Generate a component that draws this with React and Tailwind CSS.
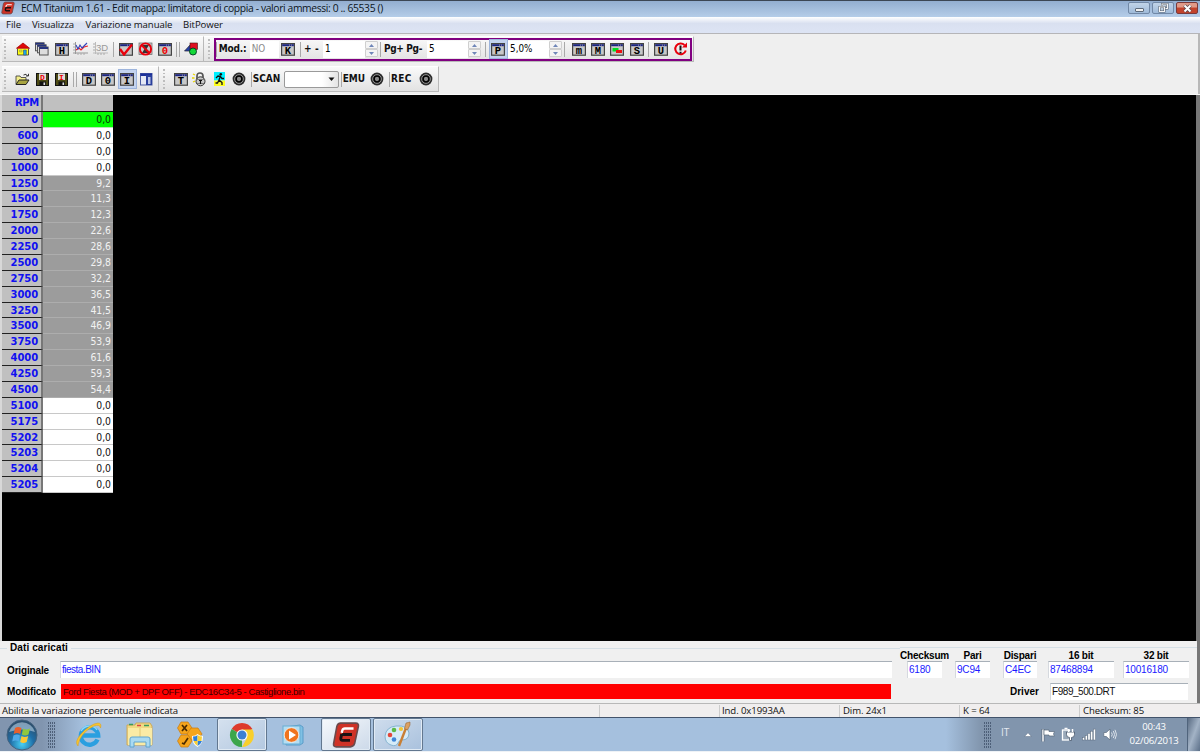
import React from "react";
import clsx from "clsx";

const rows = [
  ["0", "0,0"],
  ["600", "0,0"],
  ["800", "0,0"],
  ["1000", "0,0"],
  ["1250", "9,2"],
  ["1500", "11,3"],
  ["1750", "12,3"],
  ["2000", "22,6"],
  ["2250", "28,6"],
  ["2500", "29,8"],
  ["2750", "32,2"],
  ["3000", "36,5"],
  ["3250", "41,5"],
  ["3500", "46,9"],
  ["3750", "53,9"],
  ["4000", "61,6"],
  ["4250", "59,3"],
  ["4500", "54,4"],
  ["5100", "0,0"],
  ["5175", "0,0"],
  ["5202", "0,0"],
  ["5203", "0,0"],
  ["5204", "0,0"],
  ["5205", "0,0"],
];

const checksums = [
  { label: "Checksum", value: "6180", col: "w-[49px] mr-[6px]", box: "w-[35px] ml-[7px]" },
  { label: "Pari", value: "9C94", col: "w-[35px] mr-[13px]", box: "w-[35px]" },
  { label: "Dispari", value: "C4EC", col: "w-[34px] mr-[11px]", box: "w-[34px]" },
  { label: "16 bit", value: "87468894", col: "w-[66px] mr-[9px]", box: "w-[66px]" },
  { label: "32 bit", value: "10016180", col: "w-[66px]", box: "w-[66px]" },
];

/* ---------- toolbar pieces ---------- */

const Slot = ({ children, active }) => (
  <div
    className={clsx(
      "flex h-[20px] w-[19.3px] shrink-0 items-center justify-center",
      active && "border border-[#9db4dc] bg-[#c3d3ee]"
    )}
  >
    {children}
  </div>
);

const Sep = ({ double, wide }) => (
  <div className={clsx("flex shrink-0 justify-center gap-[2px]", wide ? "w-[7px]" : "w-[5px]")}>
    <i className="h-[15px] w-px bg-[#a9a9a9]" />
    {double && <i className="h-[15px] w-px bg-[#a9a9a9]" />}
  </div>
);

const Grip = () => (
  <div className="flex w-[5px] shrink-0 flex-col items-center gap-[2px]">
    {[0, 1, 2, 3, 4, 5].map((i) => (
      <i key={i} className="h-[1.6px] w-[2px] bg-[#bdbdbd]" />
    ))}
  </div>
);

const Win = ({ letter, color = "#000", children }) => (
  <svg width="14" height="13" viewBox="0 0 14 13">
    <rect x="0.6" y="0.6" width="12.8" height="11.6" fill="#c8c8c8" stroke="#444" strokeWidth="1.2" />
    <rect x="1.2" y="1.2" width="11.6" height="2" fill="#1b2480" />
    <rect x="8" y="1.6" width="1" height="1" fill="#99a" />
    <rect x="10" y="1.6" width="1" height="1" fill="#99a" />
    {letter && (
      <text
        x="7"
        y="11.3"
        textAnchor="middle"
        fontSize="10.5"
        fontWeight="700"
        fontFamily="Liberation Mono, monospace"
        fill={color}
      >
        {letter}
      </text>
    )}
    {children}
  </svg>
);

const House = () => (
  <svg width="14" height="14" viewBox="0 0 14 14">
    <path d="M1.5 6.500v6.500h11V6.500" fill="#ffff10" stroke="#333" strokeWidth="0.8" />
    <path d="M7 1L0.500 6.200h13z" fill="#e00808" stroke="#a00" strokeWidth="0.8" />
    <path d="M3.500 8h2.500v2H3.500z" fill="#e8f020" stroke="#886" strokeWidth="0.5" />
    <path d="M7.500 8h2.800v5H7.500z" fill="#19a6e8" stroke="#456" strokeWidth="0.6" />
  </svg>
);

const Cascade = () => (
  <svg width="14" height="14" viewBox="0 0 14 14">
    {[[0.5, 0.8], [2.5, 2.8], [4.5, 5]].map(([x, y]) => (
      <g key={x}>
        <rect x={x} y={y} width="8.6" height="8" fill="#ddd" stroke="#555" />
        <rect x={x} y={y} width="8.6" height="2" fill="#26337f" />
      </g>
    ))}
  </svg>
);

const Graph = ({ grey }) => (
  <svg width="15" height="14" viewBox="0 0 15 14">
    <path d="M2.500 0v12M0 11h15" stroke={grey ? "#bbb" : "#999"} fill="none" />
    <path d="M0 2h2M0 5h2M0 8h2M5 11v2M8 11v2M11 11v2" stroke="#aaa" />
    {grey ? (
      <text x="3" y="8.500" fontSize="9.5" fontFamily="Liberation Sans, sans-serif" fill="#999">
        3D
      </text>
    ) : (
      <>
        <path d="M3 8l3-2 2 2 3-3 4-1" stroke="#e22" fill="none" strokeWidth="1.2" />
        <path d="M3 3l2 4 2-4 2 3 2-2 3-3" stroke="#34b" fill="none" strokeWidth="1.1" />
      </>
    )}
  </svg>
);

const CheckWin = () => (
  <Win>
    <path d="M1 6l4 5.500L13 1.500" stroke="#e8000c" strokeWidth="2.4" fill="none" />
  </Win>
);

const Forbidden = () => (
  <svg width="15" height="14" viewBox="0 0 15 14">
    <rect x="1" y="1" width="13" height="11.500" fill="#c8c8c8" stroke="#666" strokeWidth="0.7" />
    <path d="M4 3h7l-2.500 4 2.500 4H4l2.500-4z" fill="#333" />
    <circle cx="7.500" cy="7" r="5.600" fill="none" stroke="#e8000c" strokeWidth="1.9" />
    <path d="M3.500 3l8 8" stroke="#e8000c" strokeWidth="1.9" />
  </svg>
);

const Shapes = () => (
  <svg width="15" height="14" viewBox="0 0 15 14">
    <path d="M0.500 9L7 2v7z" fill="#2440a8" stroke="#223" strokeWidth="0.7" />
    <rect x="6" y="1" width="7.5" height="6.5" fill="#e01020" stroke="#411" strokeWidth="0.6" />
    <circle cx="9" cy="9.5" r="3.5" fill="#12d838" stroke="#032" strokeWidth="0.9" />
  </svg>
);

const OpenFolder = () => (
  <svg width="15" height="13" viewBox="0 0 15 13">
    <path d="M1 11V3h4l1 1.500h5V7" fill="#f3ee8a" stroke="#333" strokeWidth="0.8" />
    <path d="M1 11.500L4 7h10l-3 4.500z" fill="#a8a440" stroke="#222" />
    <path d="M8.500 2q3-2 4 1M11 3h2.500V0.800" fill="none" stroke="#222" strokeWidth="0.9" />
  </svg>
);

const Floppy = ({ letter }) => (
  <svg width="13" height="13" viewBox="0 0 13 13">
    <rect x="0.5" y="0.5" width="12" height="12" fill="#4c4a14" stroke="#111" />
    <rect x="3" y="0.5" width="7" height="6.5" fill="#ddd" />
    <rect x="3.5" y="8.5" width="6.5" height="4" fill="#111" />
    <rect x="7.5" y="9.5" width="1.6" height="2.5" fill="#ddd" />
    <text x="6.500" y="6.500" textAnchor="middle" fontSize="8" fontWeight="700" fontFamily="Liberation Mono, monospace" fill="#e00">
      {letter}
    </text>
  </svg>
);

const Panels = () => (
  <svg width="13" height="13" viewBox="0 0 13 13">
    <rect x="0.5" y="0.5" width="11.5" height="11.5" fill="#e4e8f4" stroke="#4a5aa0" />
    <rect x="0.5" y="0.5" width="11.5" height="2.5" fill="#1b2f9a" />
    <rect x="6" y="2" width="6" height="10" fill="#2a3f9c" />
    <rect x="8" y="4" width="2.5" height="7" fill="#b9c4e6" />
  </svg>
);

const Padlock = () => (
  <svg width="16" height="15" viewBox="0 0 16 15">
    <path d="M1 2l2 1M0 6h2.500M1 10l2-1" stroke="#e8d400" strokeWidth="1.3" />
    <path d="M5 7V4q0-3 3-3t3 3v3" fill="none" stroke="#555" strokeWidth="1.7" />
    <circle cx="8.5" cy="9.3" r="4.5" fill="#c8c8c8" stroke="#333" />
    <path d="M5 7.500h7M5 11.500h7" stroke="#666" strokeWidth="0.8" />
    <path d="M7 8.500h3M8.500 8.500V12" stroke="#111" strokeWidth="1.2" />
  </svg>
);

const Runner = () => (
  <svg width="11" height="14" viewBox="0 0 11 14">
    <rect width="11" height="8.5" fill="#00f0ff" />
    <rect y="8.5" width="11" height="5.5" fill="#ffff20" />
    <circle cx="6.8" cy="2.2" r="1.3" fill="#111" />
    <path d="M6.500 3.500L5 8l3 2.500v2.500M5 8l-1.500 3H1.500M2 6l2-2 2.500 0.500L8 6.500h2" fill="none" stroke="#111" strokeWidth="1.3" />
  </svg>
);

const Disc = () => (
  <svg width="14" height="14" viewBox="0 0 14 14">
    <circle cx="7" cy="7" r="6.4" fill="#2c2c2c" />
    <circle cx="7" cy="7" r="4.4" fill="none" stroke="#a5a5a5" strokeWidth="0.8" />
    <circle cx="7" cy="7" r="2.8" fill="#888" stroke="#000" strokeWidth="1.3" />
  </svg>
);

const Refresh = () => (
  <svg width="15" height="15" viewBox="0 0 15 15">
    <path d="M11.500 3A5.400 5.400 0 1 0 12.800 8.500" fill="none" stroke="#e8000c" strokeWidth="2" />
    <path d="M9 5.500h5V0.500z" fill="#e8000c" />
    <path d="M7.500 3.500v5M7.500 9.800v1.700" stroke="#111" strokeWidth="2" />
  </svg>
);

const Spin = () => (
  <div className="flex h-[16px] w-[13px] shrink-0 flex-col">
    {["M1 4h5L3.500 1z", "M1 1h5L3.500 4z"].map((d) => (
      <span key={d} className="flex h-[8px] items-center justify-center rounded-[1px] border border-[#cfcfcf] bg-[#f4f4f4]">
        <svg width="7" height="5" viewBox="0 0 7 5">
          <path d={d} fill="#6f86b8" />
        </svg>
      </span>
    ))}
  </div>
);

const Field = ({ className, children }) => (
  <div className={clsx("h-[17px] shrink-0 bg-white pl-[2px] font-['DejaVu_Sans_Condensed',sans-serif] text-[9.8px] leading-[15px]", className)}>
    {children}
  </div>
);

const Label = ({ className, children }) => (
  <span
    className={clsx(
      "shrink-0 pb-px whitespace-nowrap font-['DejaVu_Sans_Condensed',sans-serif] text-[10px] leading-[15px] font-bold text-[#111]",
      className
    )}
  >
    {children}
  </span>
);

const band =
  "flex h-[26px] items-center border-t border-r border-b border-t-white border-r-[#b9b9b9] border-b-[#b9b9b9] bg-linear-to-b from-[#fafafa] to-[#e2e2e2]";

const Toolbar = () => (
  <div className="h-[61px] border-t border-r-2 border-t-[#b5b5b8] border-r-[#b8b8b8] bg-[#efefef] pt-[2px] pl-[2px]">
    <div className="flex h-[26px]">
      <div className={clsx(band, "w-[202px]")}>
        <Grip />
        <div className="w-[6.3px]" />
        <Slot><House /></Slot>
        <Slot><Cascade /></Slot>
        <Slot><Win letter="H" /></Slot>
        <Slot><Graph /></Slot>
        <Slot><Graph grey /></Slot>
        <Sep wide />
        <Slot><CheckWin /></Slot>
        <Slot><Forbidden /></Slot>
        <Slot><Win letter="0" color="#e00" /></Slot>
        <Sep double wide />
        <Slot><Shapes /></Slot>
      </div>
      <div className={clsx(band, "w-[490px] pl-[2px]")}>
        <Grip />
        <div className="ml-[3px] flex h-[23px] w-[478px] items-center border-2 border-[#800080]">
          <i className="h-[15px] w-px bg-[#a9a9a9]" />
          <Label className="ml-[2px] w-[31px] tracking-[-0.2px]">Mod.:</Label>
          <Field className="w-[29px] text-[#8a8a8a]">NO</Field>
          <Slot><Win letter="K" /></Slot>
          <Sep />
          <Label className="w-[20px] pl-[1px] tracking-[0.1px]">+ -</Label>
          <Field className="w-[42px]">1</Field>
          <Spin />
          <Sep />
          <Label className="w-[44px] pl-[1px] tracking-[-0.35px]">Pg+ Pg-</Label>
          <Field className="w-[41px]">5</Field>
          <Spin />
          <div className="w-[1px]" />
          <Sep wide />
          <Slot active><Win letter="P" /></Slot>
          <Field className="w-[41px]">5,0%</Field>
          <Spin />
          <Sep />
          <div className="w-[3px]" />
          <Slot><Win letter="m" /></Slot>
          <Slot><Win letter="M" /></Slot>
          <Slot>
            <Win>
              <rect x="2.5" y="5" width="6" height="3.5" fill="#0d2" />
              <rect x="6" y="7" width="6" height="3" fill="#e11" />
            </Win>
          </Slot>
          <Slot><Win letter="S" /></Slot>
          <Sep />
          <Slot><Win letter="U" /></Slot>
          <Slot><Refresh /></Slot>
        </div>
      </div>
    </div>
    <div className="mt-[4px] flex h-[26px]">
      <div className={clsx(band, "w-[157px]")}>
        <Grip />
        <div className="w-[6.3px]" />
        <Slot><OpenFolder /></Slot>
        <Slot><Floppy letter="D" /></Slot>
        <Slot><Floppy letter="I" /></Slot>
        <Sep double wide />
        <div className="w-px" />
        <Slot><Win letter="D" /></Slot>
        <Slot><Win letter="0" /></Slot>
        <Slot active><Win letter="I" /></Slot>
        <Slot><Panels /></Slot>
      </div>
      <div className={clsx(band, "w-[280px] pl-[2px]")}>
        <Grip />
        <div className="w-[5.500px]" />
        <Slot><Win letter="T" /></Slot>
        <Slot><Padlock /></Slot>
        <Slot><Runner /></Slot>
        <Slot><Disc /></Slot>
        <Sep />
        <Label className="ml-[-1px] w-[31px]">SCAN</Label>
        <div className="flex h-[17px] w-[55px] shrink-0 items-center justify-end rounded-[2px] border border-[#9a9a9a] bg-linear-to-r from-white from-70% to-[#e4e4e4] pr-[3px]">
          <svg width="7" height="5" viewBox="0 0 7 5">
            <path d="M0.500 0.500h6L3.500 4z" fill="#111" />
          </svg>
        </div>
        <Sep />
        <Label className="ml-[-1px] w-[25px]">EMU</Label>
        <Slot><Disc /></Slot>
        <Sep />
        <Label className="ml-[-1px] w-[25px] tracking-[0.3px]">REC</Label>
        <Slot><Disc /></Slot>
      </div>
    </div>
  </div>
);

/* ---------- window ---------- */

const EcmLogo = ({ size }) => (
  <svg width={size} height={size} viewBox="0 0 26 26">
    <path d="M8 2h14q3 0 2.500 3L21 21q-1 3-4 3H4q-3 0-2.500-3L4.500 5q0.800-3 3.500-3z" fill="#cf3226" stroke="#6a4a4c" strokeWidth="1.5" />
    <path d="M20 7h-8q-2 0-2.500 2L9 11" fill="none" stroke="#fff" strokeWidth="2.2" />
    <path d="M9.500 12.500h9M9 12l-0.800 4q-0.200 2 1.500 2h7" fill="none" stroke="#1b1113" strokeWidth="2.7" />
  </svg>
);

const winBtn = "flex h-[12px] w-[22px] items-center justify-center rounded-[2px] border";

const TitleBar = () => (
  <div className="flex h-[17px] items-start border-t border-[#3c4654] bg-linear-to-b from-[#93aed0] to-[#b5cde8] pl-[1px]">
    <EcmLogo size={14} />
    <span className="ml-[6px] whitespace-nowrap font-['Open_Sans',sans-serif] text-[10.3px] leading-[14px] tracking-[-0.36px] text-[#0c1420]">
      ECM Titanium 1.61 - Edit mappa: limitatore di coppia - valori ammessi: 0 .. 65535 ()
    </span>
    <div className="mt-px mr-[2px] ml-auto flex gap-[2px]">
      <div className={clsx(winBtn, "border-[#7188a6] bg-linear-to-b from-[#c1d3e8] to-[#9fbad9]")}>
        <i className="mt-[4px] h-[4px] w-[9px] rounded-[1px] border border-[#5d6b7c] bg-[#f0f0f0]" />
      </div>
      <div className={clsx(winBtn, "border-[#7188a6] bg-linear-to-b from-[#c1d3e8] to-[#9fbad9]")}>
        <svg width="11" height="10" viewBox="0 0 11 10">
          <rect x="4" y="1" width="5.5" height="4.5" fill="#bcd" stroke="#56606e" strokeWidth="2" />
          <rect x="4" y="1" width="5.5" height="4.5" fill="none" stroke="#f4f4f4" />
          <rect x="1.5" y="4" width="5" height="4.5" fill="#bcd" stroke="#56606e" strokeWidth="2" />
          <rect x="1.5" y="4" width="5" height="4.5" fill="none" stroke="#f4f4f4" />
        </svg>
      </div>
      <div className={clsx(winBtn, "border-[#7a3a3a] bg-linear-to-b from-[#e09a88] from-40% to-[#c2432c] to-50%")}>
        <svg width="11" height="9" viewBox="0 0 11 9">
          <path d="M2.500 1.500l6 6M8.500 1.500l-6 6" stroke="#5c4a50" strokeWidth="3.6" />
          <path d="M2.500 1.500l6 6M8.500 1.500l-6 6" stroke="#fff" strokeWidth="2" />
        </svg>
      </div>
    </div>
  </div>
);

const MenuBar = () => (
  <div className="flex h-[16px] items-center bg-linear-to-b from-white via-[#d9e0f0] via-40% to-[#dde4f4] pl-[6px] font-['Open_Sans',sans-serif] text-[9.6px] text-[#111]">
    <span className="w-[26px]">File</span>
    <span className="w-[53.5px] tracking-[-0.1px]">Visualizza</span>
    <span className="w-[97.5px] tracking-[-0.08px]">Variazione manuale</span>
    <span className="tracking-[-0.05px]">BitPower</span>
  </div>
);

const MapTable = () => (
  <div className="h-[546px] border-r-[4px] border-l-2 border-r-[#777] border-l-[#d8d8d8] bg-black">
    <div className="w-[111px] bg-[#c0c0c0]">
      <div className="flex h-[17px] border-b border-[#111]">
        <div className="w-[41px] border-r-2 border-[#777] pr-[2px] text-right font-['DejaVu_Sans',sans-serif] text-[10px] leading-[15px] font-bold tracking-[-0.3px] text-[#1010f0]">
          RPM
        </div>
      </div>
      {rows.map(([rpm, value], i) => {
        const selected = i >= 4 && i <= 17;
        return (
          <div key={rpm} className="flex h-[15.88px] font-['DejaVu_Sans',sans-serif] leading-[15px]">
            <div className="w-[41px] border-r-2 border-b border-r-[#777] border-b-[#222] bg-[#c0c0c0] pr-[3px] text-right text-[10px] font-bold tracking-[-0.1px] text-[#1010f0]">
              {rpm}
            </div>
            <div
              className={clsx(
                "w-[70px] border-b pr-[2px] text-right font-['DejaVu_Sans_Condensed',sans-serif] text-[10.3px]",
                i === 0 && "border-[#b5e8b5] bg-[#00ff00] text-[#063006]",
                selected && "border-[#adadad] bg-[#9c9c9c] text-[#f2f2f2]",
                i !== 0 && !selected && "border-[#c8c8c8] bg-white text-[#111]"
              )}
            >
              {value}
            </div>
          </div>
        );
      })}
    </div>
  </div>
);

const inset = "h-[17px] border-t border-l border-t-[#a8b0b8] border-l-[#d5d9de] bg-white leading-[15px]";
const sansBold = "font-['Liberation_Sans',sans-serif] text-[10px] font-bold text-black";

const LoadedData = () => (
  <div className="flex h-[62px] border-r-[3px] border-[#777] bg-[#f0f0f0] font-['Liberation_Sans',sans-serif] text-[10px]">
    <div className="w-[900px]">
      <div className="flex h-[14px] items-center">
        <i className="h-px w-[7px] bg-[#d5dfe5]" />
        <span className={clsx(sansBold, "-mt-px px-[3px] tracking-[0.1px]")}>Dati caricati</span>
        <i className="h-px flex-1 bg-[#d5dfe5]" />
      </div>
      <div className="mt-[6px] flex h-[17px] items-center pl-[7px]">
        <span className={clsx(sansBold, "w-[53px] pt-[2px] tracking-[-0.15px]")}>Originale</span>
        <div className={clsx(inset, "w-[832px] pl-[1px] tracking-[-0.5px] text-[#1a1aff]")}>fiesta.BIN</div>
      </div>
      <div className="mt-[5px] flex h-[16px] items-center pl-[7px]">
        <span className={clsx(sansBold, "w-[54px] tracking-[-0.1px]")}>Modificato</span>
        <div className="h-[15px] w-[830px] bg-[#ff0000] pl-[2px] text-[9.5px] leading-[15px] tracking-[-0.43px] text-[#3a0000]">
          Ford Fiesta (MOD + DPF OFF) - EDC16C34-5 - Castiglione.bin
        </div>
      </div>
    </div>
    <div className="mt-[6px] flex-1 border-t border-[#d5dfe5]">
      <div className="flex">
        {checksums.map((c) => (
          <div key={c.label} className={clsx("shrink-0", c.col)}>
            <div className={clsx(sansBold, "flex h-[13px] items-end justify-center whitespace-nowrap leading-[11px] tracking-[-0.2px]")}>
              {c.label}
            </div>
            <div className={clsx(inset, c.box, "pl-[1px] tracking-[-0.2px] text-[#1a1aff]")}>{c.value}</div>
          </div>
        ))}
      </div>
      <div className="mt-[5px] flex items-center pl-[110px]">
        <span className={clsx(sansBold, "w-[40px]")}>Driver</span>
        <div className={clsx(inset, "h-[16px] w-[138px] pl-[1px] tracking-[-0.45px] text-[#111]")}>F989_500.DRT</div>
      </div>
    </div>
  </div>
);

const StatusBar = () => (
  <div className="flex h-[14px] items-center border-t border-[#b8b8b8] bg-[#f0eeee] font-['Open_Sans',sans-serif] text-[9.6px] leading-[12px] tracking-[-0.1px] whitespace-nowrap text-[#111]">
    <span className="w-[600px] border-r border-[#ccc] pl-[2px]">Abilita la variazione percentuale indicata</span>
    <span className="h-[12px] w-[120px] border-r border-[#ccc]" />
    <span className="w-[120px] border-r border-[#ccc] pl-[2px]">Ind. 0x1993AA</span>
    <span className="w-[120px] border-r border-[#ccc] pl-[3px]">Dim. 24x1</span>
    <span className="w-[120px] border-r border-[#ccc] pl-[3px]">K = 64</span>
    <span className="pl-[3px]">Checksum: 85</span>
  </div>
);

/* ---------- taskbar ---------- */

const Dots = () => (
  <div className="grid w-[7px] grid-cols-4 gap-[1px]">
    {Array.from({ length: 36 }, (_, i) => (
      <i key={i} className="h-[2px] w-px bg-[#4d5f78]" />
    ))}
  </div>
);

const StartOrb = () => (
  <svg width="32" height="32" viewBox="0 0 32 32">
    <defs>
      <radialGradient id="orb" cx="50%" cy="80%" r="70%">
        <stop offset="0" stopColor="#48d0f4" />
        <stop offset="0.55" stopColor="#1f6fa8" />
        <stop offset="1" stopColor="#2c506f" />
      </radialGradient>
    </defs>
    <circle cx="16" cy="16" r="15" fill="url(#orb)" stroke="#45637f" />
    <path d="M3 13a13.500 13.500 0 0 1 26 0q-13-5-26 0z" fill="#c6dced" opacity="0.55" />
    <path d="M9 9q3-2 6.500 0l-1.200 6q-3.300-2-6.600 0z" fill="#e9602c" />
    <path d="M17 9.500q3 2 7 0l-1.500 6q-3.500 2-6.700 0z" fill="#90c73e" />
    <path d="M7.400 16.500q3.300-2 6.600 0l-1.300 6q-3-2-6.400 0z" fill="#50a9e8" />
    <path d="M15.500 17q3.200 2 6.700 0l-1.500 6q-3.400 2-6.500 0z" fill="#fbc633" />
  </svg>
);

const Explorer = () => (
  <svg width="28" height="26" viewBox="0 0 28 26">
    <path d="M1 3h8l1-2h14l2 3v19H1z" fill="#f0d983" stroke="#cda95a" />
    <path d="M3 2.500h4M18 3.500h5" stroke="#3a9c5b" strokeWidth="1.5" />
    <path d="M11 3.500h4" stroke="#d44" strokeWidth="1.5" />
    <path d="M2 6h24v17H2z" fill="#faeba5" />
    <path d="M14 6v12" stroke="#e2c877" />
    <path d="M4 25v-8q0-2 2-2h16q2 0 2 2v8h-4v-5H8v5z" fill="#a9daf2" stroke="#5ea4cf" />
  </svg>
);

const InternetExplorer = () => (
  <svg width="28" height="28" viewBox="0 0 28 28">
    <path d="M22.500 18.500a8.700 8.700 0 1 1 0.700-4H8" fill="none" stroke="#2b9fe0" strokeWidth="4.4" />
    <path d="M6 10q3-5 9-5 5 0 7 4" fill="none" stroke="#8dd8fa" strokeWidth="1.3" />
    <path d="M3 25q-4-4 3-12Q15 3 23 2q4 0 2.500 5Q25 3 19 5 9 10 5 18q-2 5-2 7z" fill="#f7c52e" stroke="#d99b1a" strokeWidth="0.5" />
  </svg>
);

const Hexes = () => (
  <svg width="27" height="27" viewBox="0 0 27 27">
    {["M4 1h7l4 6-4 6H4L0.500 7z", "M14 7h7l4 6-4 6h-7l-4-6z", "M4 14h7l4 6-4 6H4l-3.500-6z"].map((d) => (
      <path key={d} d={d} fill="#f5a51c" stroke="#c87a10" strokeWidth="0.7" />
    ))}
    <path d="M5 4l5 6M10 4l-5 6M5 22l2 1 4-6" stroke="#4a2a00" strokeWidth="1.7" fill="none" />
    <path d="M15 15q4 0 5.500-2 2 2 5.500 2 0 8-5.500 11Q15 23 15 15z" fill="#fff" />
    <path d="M16 15.500q3 0 4.500-1.500v6H16.500zM20.500 20H25q-1 3-4.500 5z" fill="#2b7fdc" />
    <path d="M20.500 14q2 1.500 4.500 1.500L24.500 20h-4zM16.500 20h4v5q-3-2-4-5z" fill="#f8cf36" />
  </svg>
);

const Chrome = () => (
  <svg width="26" height="26" viewBox="0 0 26 26">
    <path d="M13 13L2.600 7A12 12 0 0 1 23.400 7z" fill="#dd3a2c" />
    <path d="M13 13v12A12 12 0 0 1 2.600 7z" fill="#3da64c" />
    <path d="M13 7.500h10.500A12 12 0 0 1 13 25l5-9z" fill="#f8cf2c" />
    <circle cx="13" cy="13" r="5.6" fill="#fff" />
    <circle cx="13" cy="13" r="4.5" fill="#3b7fd4" />
  </svg>
);

const MediaPlayer = () => (
  <svg width="26" height="24" viewBox="0 0 26 24">
    <path d="M5 4L19 2l3 2v16l-3 2H5z" fill="#7fc0e4" stroke="#5a9cc8" />
    <rect x="2" y="3" width="17" height="18" fill="#b4def2" stroke="#69add4" />
    <circle cx="10.5" cy="12" r="7.3" fill="#f0741e" stroke="#fff" strokeWidth="0.7" />
    <path d="M8 7.500l7 4.500-7 4.500z" fill="#fff" />
  </svg>
);

const Paint = () => (
  <svg width="28" height="28" viewBox="0 0 28 28">
    <path d="M12 5q12-1 13 7 0 7-7 7-3 0-4 3-2 4-7 2-6-2-6-9 1-9 11-10z" fill="#d6ebf7" stroke="#84b3d0" />
    <circle cx="6" cy="14" r="2.3" fill="#e2463a" />
    <circle cx="10" cy="9" r="2.3" fill="#5cb947" />
    <circle cx="17" cy="8" r="2.1" fill="#f2c636" />
    <circle cx="10" cy="18.5" r="2.3" fill="#3f86d8" />
    <path d="M15 25l7-18" stroke="#c87f35" strokeWidth="2.4" />
    <path d="M20.500 7.500L22 2l4-1v3l-2.500 5z" fill="#dca060" stroke="#8e5a28" strokeWidth="0.5" />
  </svg>
);

const TaskButton = ({ className, children }) => (
  <div
    className={clsx(
      "flex h-[33px] w-[50px] shrink-0 items-center justify-center rounded-[2px] border border-[#62778f] bg-linear-to-br shadow-[inset_0_0_0_1px_#e0eaf4]",
      className
    )}
  >
    {children}
  </div>
);

const Taskbar = () => (
  <div className="flex h-[34px] items-center border-t border-[#42536b] bg-linear-to-r from-[#8195af] from-[3.5%] via-[#a5c0de] via-[7%] to-[#a5c0de]">
    <div className="ml-[6px] w-[42px]"><StartOrb /></div>
    <div className="w-[27px]"><Dots /></div>
    <div className="w-[51px]"><InternetExplorer /></div>
    <div className="w-[51px]"><Explorer /></div>
    <div className="w-[40px]"><Hexes /></div>
    <TaskButton className="from-[#d5e1ef] to-[#b3c8e0]"><Chrome /></TaskButton>
    <div className="ml-[14px] w-[40px]"><MediaPlayer /></div>
    <TaskButton className="from-[#f6f9fc] to-[#ccd9e9]"><EcmLogo size={28} /></TaskButton>
    <div className="w-[2px]" />
    <TaskButton className="from-[#cfdded] to-[#a9c1dd]"><Paint /></TaskButton>
    <div className="ml-auto flex h-full w-[254px] items-center bg-linear-to-r from-[#a5c0de] to-[#8195ad] to-[14%] pl-[38px]">
      <Dots />
      <span className="ml-[10px] w-[23px] pb-[4px] font-['Open_Sans',sans-serif] text-[10px] text-[#e4e9f0]">IT</span>
      <svg width="8" height="5" viewBox="0 0 8 5">
        <path d="M0.500 4.500L4 0.800l3.500 3.700z" fill="#fff" stroke="#5d6e84" strokeWidth="0.5" />
      </svg>
      <svg className="ml-[9px]" width="15" height="14" viewBox="0 0 15 14">
        <path d="M2 1v12.500" stroke="#5a6a7d" strokeWidth="3" />
        <path d="M2 1.500v12" stroke="#fff" strokeWidth="1.5" />
        <path d="M3 2h5v1.500h5.500l-1 2.500 1 2H8V7H3z" fill="#fff" stroke="#5a6a7d" strokeWidth="0.7" />
      </svg>
      <svg className="ml-[5px]" width="14" height="15" viewBox="0 0 14 15">
        <rect x="1.5" y="3" width="7" height="10" fill="#9aa9b9" stroke="#fff" strokeWidth="1.3" />
        <path d="M3.500 1.500h3" stroke="#fff" strokeWidth="1.5" />
        <path d="M5.500 5h8v2.500q0 3-3 3v3h-2v-3q-3 0-3-3z" fill="#fff" stroke="#46566a" strokeWidth="0.8" />
        <path d="M7.500 2v3M11.500 2v3" stroke="#fff" strokeWidth="1.5" />
      </svg>
      <svg className="ml-[7px]" width="14" height="13" viewBox="0 0 14 13">
        {[0, 1, 2, 3, 4].map((i) => (
          <rect key={i} x={0.5 + i * 2.7} y={9.5 - i * 2.1} width="2.2" height={2.5 + i * 2.1} fill="#fff" stroke="#5a6a7d" strokeWidth="0.5" />
        ))}
      </svg>
      <svg className="ml-[7px]" width="14" height="13" viewBox="0 0 14 13">
        <path d="M0.800 4.500h2.500L7 1v11L3.300 8.500H0.800z" fill="#fff" stroke="#5a6a7d" strokeWidth="0.7" />
        <path d="M8.500 4.500q1.500 2 0 4M10.300 3q2.600 3.500 0 7M12 1.800q3 4.700 0 9.400" fill="none" stroke="#e6ebf1" strokeWidth="0.9" />
      </svg>
      <div className="ml-auto w-[60px] pb-px text-center font-['Open_Sans',sans-serif] text-[9.6px] leading-[14px] tracking-[-0.2px] text-white">
        <div>00:43</div>
        <div>02/06/2013</div>
      </div>
      <div className="ml-[3px] h-full w-[13px] border-l border-[#50647c] bg-linear-to-br from-[#5b6d84] via-[#a3b3c6] to-[#5c7089]" />
    </div>
  </div>
);

export default function App() {
  return (
    <div className="flex h-[752px] w-[1200px] flex-col overflow-hidden bg-[#eef2f6]">
      <TitleBar />
      <MenuBar />
      <Toolbar />
      <div className="h-px shrink-0 bg-[#f8f8f8]" />
      <MapTable />
      <LoadedData />
      <StatusBar />
      <Taskbar />
    </div>
  );
}
